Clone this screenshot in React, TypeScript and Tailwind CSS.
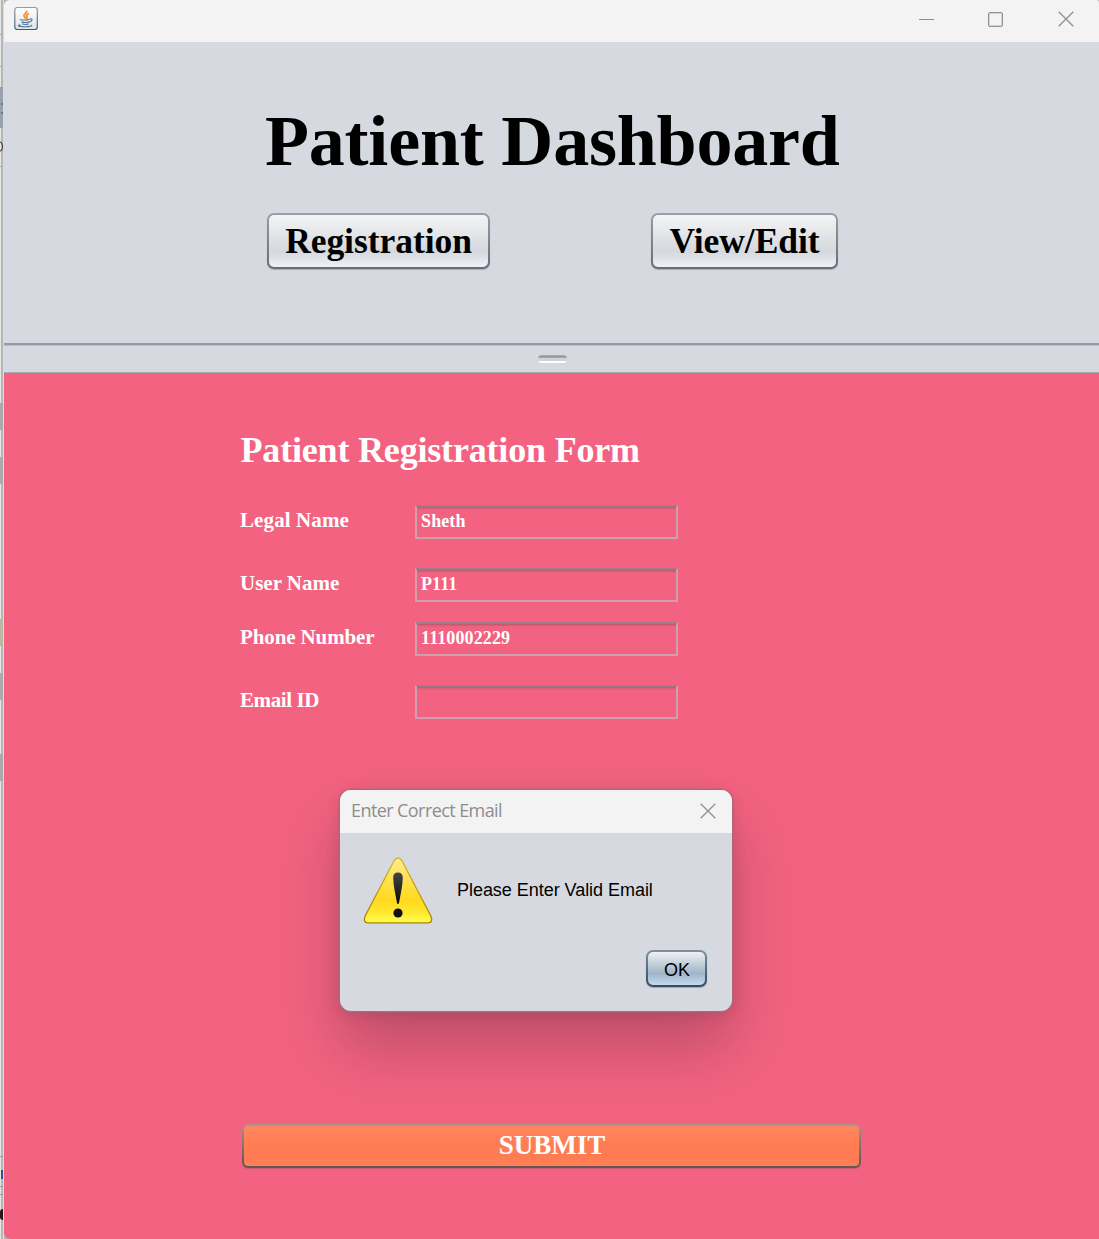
import React from 'react';

const fields = [
  { label: 'Legal Name', value: 'Sheth', gap: 'mb-[29px]', tracking: 'tracking-[0.1px]' },
  { label: 'User Name', value: 'P111', gap: 'mb-5', tracking: 'tracking-normal' },
  { label: 'Phone Number', value: '1110002229', gap: 'mb-[29px]', tracking: 'tracking-[-0.12px]' },
  { label: 'Email ID', value: '', gap: '', tracking: 'tracking-[-0.4px]' },
];

function JavaIcon() {
  return (
    <svg width="26" height="26" viewBox="0 0 26 26" fill="none">
      <defs>
        <linearGradient id="frame" x1="0" y1="0" x2="0" y2="1">
          <stop stopColor="#8a9eae" />
          <stop offset="1" stopColor="#405c70" />
        </linearGradient>
        <linearGradient id="face" x1="0" y1="0" x2="0" y2="1">
          <stop stopColor="#fff" />
          <stop offset="1" stopColor="#dfe2e7" />
        </linearGradient>
      </defs>
      <rect x="1.8" y="1.5" width="22.5" height="22" rx="2.5" fill="url(#face)" stroke="url(#frame)" strokeWidth="1.2" />
      <path d="M13.700 4.800c1 2.500-4 3.300-2.600 5.400.5.900 1.300 1.400 1.400 2.600M16 7.800c-2.200.8-3 1.700-2.200 2.700.6.900.1 1.500-.3 2.100" stroke="#ee8a31" strokeWidth="1.700" />
      <path d="M7.500 13.200c-1.500.9 5.500 1.100 9 .2M8.500 15.700c1.500.9 5.500.8 8 .1M9.300 17.800c1.400.8 4.500.7 6.300.1M16.800 13c3.200-.7 2.700 2.200-.3 2.900M7.500 18.900c-6 1.100 2 2.200 7 1.700 4-.3 5-.9 3.500-1.600" stroke="#54799b" strokeWidth="1.2" />
    </svg>
  );
}

function CloseIcon() {
  return (
    <svg width="16" height="16" viewBox="0 0 16 16" stroke="#8f8f8f" strokeWidth="1.3">
      <path d="M.7.700l14.600 14.600M15.300.700L.7 15.300" />
    </svg>
  );
}

function WarningIcon() {
  return (
    <svg width="70" height="68" viewBox="0 0 70 68">
      <defs>
        <linearGradient id="warn" x1="0" y1="0" x2="0" y2="1">
          <stop stopColor="#ffeb91" />
          <stop offset=".38" stopColor="#ffe04a" />
          <stop offset=".65" stopColor="#ffd91f" />
          <stop offset=".85" stopColor="#ffe92f" />
          <stop offset="1" stopColor="#ffff52" />
        </linearGradient>
        <linearGradient id="warnEdge" x1="0" y1="0" x2="0" y2="1">
          <stop stopColor="#d9b62a" />
          <stop offset="1" stopColor="#a58808" />
        </linearGradient>
        <linearGradient id="mark" x1="0" y1="0" x2="0" y2="1">
          <stop stopColor="#454545" />
          <stop offset="1" stopColor="#080808" />
        </linearGradient>
      </defs>
      <path d="M31.300 3.300Q35-1.300 38.700 3.300L67.600 58.500Q70.600 65.800 65 65.900H5Q-.6 65.800 2.400 58.500Z" fill="url(#warn)" stroke="url(#warnEdge)" strokeWidth="1.400" />
      <path d="M35 15.500c-3.300 0-4.900 1.900-4.800 5.500.2 8 2.400 17 3.800 25 .2 1.400 1.800 1.400 2 0 1.400-8 3.600-17 3.800-25 .1-3.600-1.500-5.500-4.800-5.500Z" fill="url(#mark)" />
      <circle cx="35" cy="56" r="4.600" fill="#101010" />
    </svg>
  );
}

function NavButton({ children, size }: { children: string; size: string }) {
  return (
    <button className={`${size} h-[56px] shrink-0 rounded-[7px] bg-linear-to-b from-[#9b9fa5] to-[#696d73] p-[2px] shadow-[0_1px_1px_#a9adb5]`}>
      <span className="flex h-full items-center justify-center rounded-[5px] bg-[linear-gradient(#f3f4f5,#e2e4e7_40%,#d5d8dd_70%,#d9dce2_76%,#eef2f9)] text-[35.5px] leading-[52px] font-bold tracking-[-0.05px]">
        {children}
      </span>
    </button>
  );
}

function EdgeSliver() {
  return (
    <div className="relative w-1 shrink-0 overflow-hidden border-r border-[#d8dade] bg-[linear-gradient(90deg,#e5e6e2_1px,#b5b6b6_1px)]">
      <i className="absolute top-[34px] h-px w-[2px] bg-[#a9aaaa]" />
      <i className="absolute top-[66px] h-px w-[2px] bg-[#a9aaaa]" />
      <i className="absolute top-[87px] h-[41px] w-[3px] bg-[#98a1ad]" />
      <i className="absolute top-[103px] left-px h-[2px] w-[2px] bg-[#6e7888]" />
      <i className="absolute top-[112px] left-px h-[2px] w-[2px] bg-[#6e7888]" />
      <i className="absolute top-[141px] left-[-6px] h-[11px] w-[9px] rounded-full border border-[#33261f]" />
      <i className="absolute top-[166px] h-px w-[2px] bg-[#a9aaaa]" />
      <i className="absolute top-[403px] h-[27px] w-[3px] bg-[#a9aaa9]" />
      <i className="absolute top-[457px] h-[27px] w-[3px] bg-[#a9aaa9]" />
      <i className="absolute top-[619px] h-[27px] w-[3px] bg-[#bcb7a2]" />
      <i className="absolute top-[673px] h-[27px] w-[3px] bg-[#a9aaa9]" />
      <i className="absolute top-[754px] h-[27px] w-[3px] bg-[#a9aaa9]" />
      <i className="absolute top-[1156px] h-px w-[3px] bg-[#999]" />
      <i className="absolute top-[1170px] left-px h-[9px] w-[2px] bg-[#35508c]" />
      <i className="absolute top-[1186px] h-px w-[3px] bg-[#999]" />
      <i className="absolute top-[1194px] h-px w-[3px] bg-[#999]" />
      <i className="absolute top-[1209px] h-[11px] w-[3px] rounded-l-full bg-[#2b1718]" />
    </div>
  );
}

export default function App() {
  return (
    <div className="relative flex h-[1239px] w-[1099px] overflow-hidden bg-[#b5b6b6] font-['Liberation_Serif',serif] text-black">
      <EdgeSliver />
      <main className="flex min-w-0 flex-1 flex-col overflow-hidden rounded-tl-[6px] rounded-tr-[3px] rounded-bl-[6px] bg-[#d6d9e0]">
        <header className="flex h-[42px] shrink-0 items-start bg-[#f3f3f3] pt-[6px] pl-[9px]">
          <JavaIcon />
          <div className="ml-auto flex items-center pt-[5px] pr-[25px]">
            <div className="mr-[54px] h-px w-[15px] bg-[#8f8f8f]" />
            <div className="mr-[55px] h-[15px] w-[15px] rounded-[2px] border-[1.5px] border-[#929292] shadow-[inset_0_0_0_0.5px_#b5b5b5]" />
            <CloseIcon />
          </div>
        </header>

        <section className="h-[301px] shrink-0 pt-[58px]">
          <h1 className="ml-[261px] h-[83px] text-[72px] leading-[83px] font-bold tracking-[-0.2px] whitespace-nowrap">Patient Dashboard</h1>
          <div className="mt-[30px] flex gap-[161px] pl-[263px]">
            <NavButton size="w-[223px]">Registration</NavButton>
            <NavButton size="w-[187px]">View/Edit</NavButton>
          </div>
        </section>

        <div className="flex h-[30px] shrink-0 justify-center border-t-2 border-b border-t-[#959aa5] border-b-[#a9abb3] pt-[10px] pl-px shadow-[inset_0_1px_0_#b9bdc6]">
          <div className="h-[8px] w-[29px] rounded-full bg-[linear-gradient(#a3a8b2_1px,#8e949f_1px,#a5aab4_3px,#cfd2d9_3px,#cfd2d9_6px,#fff_6px)]" />
        </div>

        <section className="relative flex-1 bg-[#f36381] pt-[57px] pl-[236px] font-bold text-white">
          <h2 className="h-[41px] pl-[0.5px] text-[36px] leading-[41px] tracking-[-0.18px]">Patient Registration Form</h2>
          <form className="mt-[34px]">
            {fields.map((field) => (
              <div key={field.label} className={`${field.gap} flex h-[34px]`}>
                <label className={`${field.tracking} w-[175px] text-[21px] leading-[31px]`}>{field.label}</label>
                <div className="flex h-[34px] w-[263px] items-center border-2 border-[#cf9fae] border-t-[#a47a88] pb-[2px] pl-1 text-[18px] leading-[28px] tracking-[0.12px] shadow-[inset_0_1px_0_#c45870,inset_0_2px_0_#d8607b,inset_0_3px_0_#e8627e]">
                  {field.value}
                </div>
              </div>
            ))}
          </form>

          <button className="mt-[405px] ml-[2px] block h-[44px] w-[619px] rounded-[6px] bg-linear-to-b from-[#a99491] to-[#65514f] p-[2px] shadow-[0_1px_1px_#ca5c73]">
            <span className="flex h-full items-center justify-center rounded-[4px] bg-[linear-gradient(#ff865e,#ff7c53_50%,#ff7c53_80%,#ff8055)] pb-[1px] pl-px text-[27px]">SUBMIT</span>
          </button>
        </section>
      </main>

      <div role="dialog" className="absolute top-[790px] left-[340px] flex h-[221px] w-[392px] flex-col overflow-hidden rounded-[11px] bg-[#d6d9e0] font-['Liberation_Sans',sans-serif] shadow-[0_0_0_1.5px_#b36577,0_3px_14px_rgba(60,30,40,.16),0_36px_64px_rgba(60,30,45,.30)]">
        <div className="flex h-[43px] shrink-0 items-center justify-between bg-[#f3f3f3] pr-[16px] pb-[2px] pl-[11px] font-['Open_Sans',sans-serif] text-[18px] tracking-[-0.58px] text-[#8d8d8d]">
          <span>Enter Correct Email</span>
          <CloseIcon />
        </div>
        <div className="flex h-[117px] pt-[24px] pl-[23px]">
          <WarningIcon />
          <p className="ml-[24px] pt-[23px] text-[18px] leading-[20px] tracking-[-0.04px] whitespace-nowrap">Please Enter Valid Email</p>
        </div>
        <button className="mr-[25px] h-[37px] w-[61px] self-end rounded-[7px] bg-linear-to-b from-[#7e90a3] to-[#354a5e] p-[2px] shadow-[0_1px_1px_#a1a8b0]">
          <span className="flex h-full items-center justify-center rounded-[5px] bg-[linear-gradient(#eef1f4,#bdccd7_40%,#9fb5c7_65%,#c3d9ef)] pt-[3px] pl-px text-[18px]">OK</span>
        </button>
      </div>
    </div>
  );
}
